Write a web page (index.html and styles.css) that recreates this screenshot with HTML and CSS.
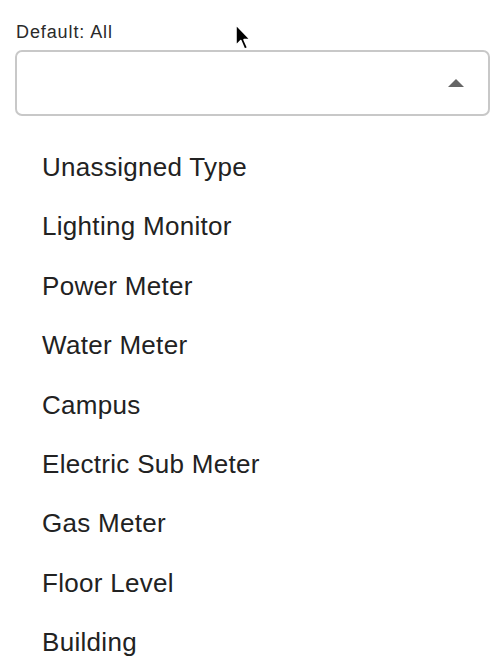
FILE: index.html
```html
<!DOCTYPE html>
<html>
<head>
<meta charset="utf-8">
<link rel="stylesheet" href="styles.css">
</head>
<body>
<div class="page">
  <div class="field">
    <div class="label">Default: All</div>
    <div class="select">
      <svg class="caret" width="16" height="8" viewBox="0 0 16 8"><path d="M0 8 L8 0 L16 8 Z" fill="#666"/></svg>
    </div>
  </div>
  <ul class="options">
    <li>Unassigned Type</li>
    <li>Lighting Monitor</li>
    <li>Power Meter</li>
    <li>Water Meter</li>
    <li>Campus</li>
    <li>Electric Sub Meter</li>
    <li>Gas Meter</li>
    <li>Floor Level</li>
    <li>Building</li>
  </ul>
  <svg class="cursor" width="20" height="30" viewBox="0 0 18 28">
    <path d="M1.5 1.5 L1.5 21 L6 16.5 L9.5 24.5 L12.5 23.2 L9 15.5 L15 15.5 Z" fill="#000" stroke="#fff" stroke-width="1.5" stroke-linejoin="round"/>
  </svg>
</div>
</body>
</html>
```

FILE: styles.css
```css
html, body {
  margin: 0;
  padding: 0;
  background: #fff;
}
.page {
  position: relative;
  width: 502px;
  height: 670px;
  overflow: hidden;
  font-family: "Liberation Sans", Arial, sans-serif;
}
.field {
  padding: 22px 12px 0 15px;
}
.label {
  font-size: 18px;
  letter-spacing: 0.9px;
  color: #2a2a2a;
  line-height: 20px;
  padding-left: 1px;
}
.select {
  margin-top: 8px;
  height: 62px;
  border: 2px solid #c8c8c8;
  border-radius: 7px;
  display: flex;
  align-items: center;
  justify-content: flex-end;
  padding-right: 24px;
}
.caret {
  display: block;
}
.options {
  list-style: none;
  margin: 22px 0 0 0;
  padding: 0 0 0 42px;
}
.options li {
  font-size: 26px;
  line-height: 59.4px;
  color: #222;
  letter-spacing: 0.3px;
}
.cursor {
  position: absolute;
  left: 234px;
  top: 23px;
}
```
